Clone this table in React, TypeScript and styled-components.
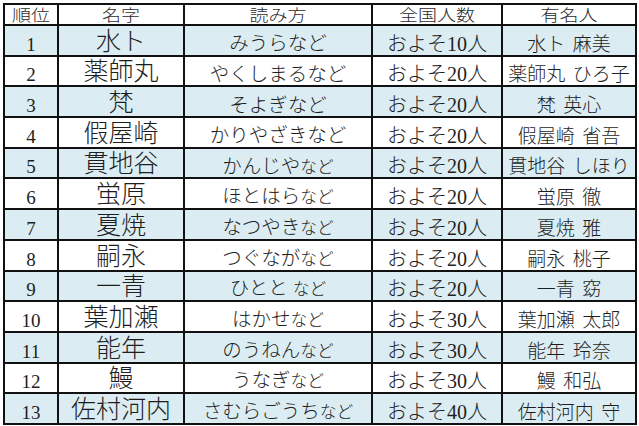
import React from 'react'
import styled, { createGlobalStyle } from 'styled-components'

const GlobalStyle = createGlobalStyle`
  html, body {
    margin: 0;
    padding: 0;
    background: #ffffff;
  }
  body {
    font-family: "Liberation Serif", "Noto Sans CJK JP", serif;
    color: #1e1e1e;
  }
`

const Page = styled.div`
  width: 639px;
  height: 426px;
  padding: 3px 0 0 3px;
  box-sizing: border-box;
  overflow: hidden;
`

const Table = styled.table`
  border-collapse: collapse;
  table-layout: fixed;
  width: 632px;
  border: 2px solid #111;
`

const HeadCell = styled.th`
  height: 19px;
  padding: 0;
  border: 2px solid #111;
  font-weight: 300;
  font-size: 19px;
  line-height: 19px;
  text-align: center;
  vertical-align: bottom;
  overflow: hidden;
  color: #2a2a2a;
`

const Squash = styled.span`
  display: inline-block;
  transform: scaleY(0.86);
  transform-origin: bottom;
`

const Row = styled.tr<{ $shaded: boolean }>`
  height: 30.7px;
  background: ${p => (p.$shaded ? '#dbedf3' : '#ffffff')};
`

const Cell = styled.td<{ $size: number }>`
  padding: 0 0 1px 0;
  border: 2px solid #111;
  font-size: ${p => p.$size}px;
  font-weight: 300;
  line-height: 1;
  text-align: center;
  vertical-align: bottom;
  white-space: nowrap;
  overflow: hidden;
  color: #1e1e1e;
`

const Nado = styled.span<{ $small: boolean }>`
  font-size: ${p => (p.$small ? '0.86em' : '1em')};
`

const Gap = styled.span`
  display: inline-block;
  width: 0.4em;
`

type Entry = {
  name: string
  yomi: string
  count: string
  given: string
}

const rows: Entry[] = [
  { name: '水ト', yomi: 'みうら', count: 'およそ10人', given: '麻美' },
  { name: '薬師丸', yomi: 'やくしまる', count: 'およそ20人', given: 'ひろ子' },
  { name: '梵', yomi: 'そよぎ', count: 'およそ20人', given: '英心' },
  { name: '假屋崎', yomi: 'かりやざき', count: 'およそ20人', given: '省吾' },
  { name: '貫地谷', yomi: 'かんじや', count: 'およそ20人', given: 'しほり' },
  { name: '蛍原', yomi: 'ほとはら', count: 'およそ20人', given: '徹' },
  { name: '夏焼', yomi: 'なつやき', count: 'およそ20人', given: '雅' },
  { name: '嗣永', yomi: 'つぐなが', count: 'およそ20人', given: '桃子' },
  { name: '一青', yomi: 'ひとと', count: 'およそ20人', given: '窈' },
  { name: '葉加瀬', yomi: 'はかせ', count: 'およそ30人', given: '太郎' },
  { name: '能年', yomi: 'のうねん', count: 'およそ30人', given: '玲奈' },
  { name: '鰻', yomi: 'うなぎ', count: 'およそ30人', given: '和弘' },
  { name: '佐村河内', yomi: 'さむらごうち', count: 'およそ40人', given: '守' },
]

function App() {
  return (
    <Page>
      <GlobalStyle />
      <Table>
        <colgroup>
          <col style={{ width: 54 }} />
          <col style={{ width: 126 }} />
          <col style={{ width: 188 }} />
          <col style={{ width: 130 }} />
          <col style={{ width: 134 }} />
        </colgroup>
        <thead>
          <tr>
            <HeadCell><Squash>順位</Squash></HeadCell>
            <HeadCell><Squash>名字</Squash></HeadCell>
            <HeadCell><Squash>読み方</Squash></HeadCell>
            <HeadCell><Squash>全国人数</Squash></HeadCell>
            <HeadCell><Squash>有名人</Squash></HeadCell>
          </tr>
        </thead>
        <tbody>
          {rows.map((r, i) => (
            <Row key={r.name} $shaded={i % 2 === 0}>
              <Cell $size={19}>{i + 1}</Cell>
              <Cell $size={25}>{r.name}</Cell>
              <Cell $size={19.5}>
                {r.yomi}
                {r.yomi === 'ひとと' ? ' ' : ''}
                <Nado $small={i >= 4}>など</Nado>
              </Cell>
              <Cell $size={20}>{r.count}</Cell>
              <Cell $size={19}>
                {r.name}
                <Gap />
                {r.given}
              </Cell>
            </Row>
          ))}
        </tbody>
      </Table>
    </Page>
  )
}

export default App
